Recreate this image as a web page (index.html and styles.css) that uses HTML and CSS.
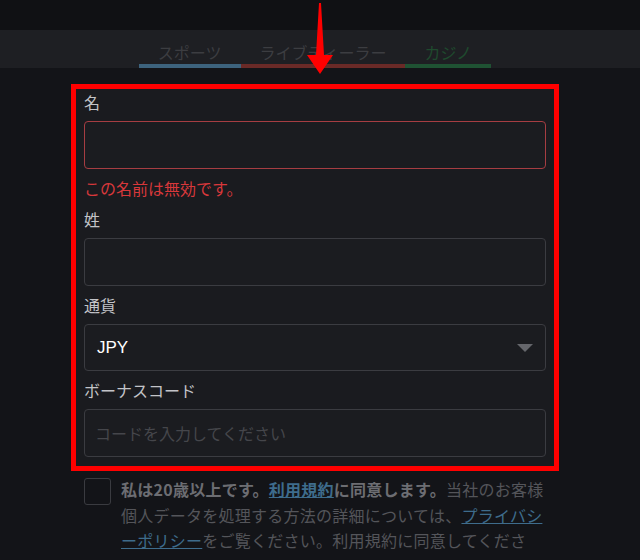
FILE: index.html
```html
<!DOCTYPE html>
<html lang="ja">
<head>
    <meta charset="UTF-8">
    <meta name="viewport" content="width=device-width, initial-scale=1.0">
    <title>登録</title>
    <link rel="stylesheet" href="styles.css">
</head>
<body>
    <div class="topbar"></div>
    <nav class="tabs">
        <a class="tab tab-sports">スポーツ</a>
        <a class="tab tab-live">ライブディーラー</a>
        <a class="tab tab-casino">カジノ</a>
    </nav>

    <svg class="pointer" width="40" height="80" viewBox="0 0 40 80">
        <polygon points="19,3 21,3 24,55 33,55 20,74 7,55 16,55" fill="#ff0000"/>
    </svg>

    <main class="page">
        <form class="form-box">
            <label class="field-label" for="firstName">名</label>
            <input class="field-input invalid" id="firstName" type="text">
            <p class="field-error">この名前は無効です。</p>

            <label class="field-label" for="lastName">姓</label>
            <input class="field-input" id="lastName" type="text">

            <label class="field-label">通貨</label>
            <div class="field-select">
                <span class="select-value">JPY</span>
                <svg width="16" height="8" viewBox="0 0 16 8"><polygon points="0,0 16,0 8,8" fill="#65666b"/></svg>
            </div>

            <label class="field-label" for="bonusCode">ボーナスコード</label>
            <input class="field-input" id="bonusCode" type="text" placeholder="コードを入力してください">
        </form>

        <div class="terms">
            <span class="checkbox"></span>
            <p class="terms-text"><b>私は20歳以上です。<a class="link">利用規約</a>に同意します。</b>当社のお客様個人データを処理する方法の詳細については、<a class="link thin">プライバシーポリシー</a>をご覧ください。利用規約に同意してください。</p>
        </div>
    </main>
</body>
</html>
```

FILE: styles.css
```css
body {
    margin: 0;
    padding: 0;
    background-color: #131418;
    font-family: "Noto Sans CJK JP", "Noto Sans", sans-serif;
    color: #c3c4c8;
    height: 560px;
    overflow: hidden;
}

.topbar {
    height: 30px;
    background-color: #101114;
}

.tabs {
    display: flex;
    justify-content: center;
    height: 38px;
    padding-right: 10px;
    background-color: #1e1f23;
}

.tab {
    padding: 11px 19px 0;
    font-size: 16px;
    line-height: 23px;
    color: #3c3d41;
    border-bottom: 4px solid;
}

.tab-sports {
    border-color: #3d637d;
}

.tab-live {
    border-color: #6a2a27;
}

.tab-casino {
    color: #1f4a2e;
    border-color: #1f5233;
}

.pointer {
    position: absolute;
    top: 0;
    left: 300px;
}

.page {
    padding: 16px 0 0 71px;
}

.form-box {
    display: flex;
    flex-direction: column;
    width: 462px;
    padding: 1px 8px 9px;
    border: 5px solid #ff0000;
    background-color: #1a1b1f;
}

.field-label {
    font-size: 16px;
    line-height: 24px;
    margin-bottom: 7px;
}

.field-input {
    box-sizing: border-box;
    width: 100%;
    height: 48px;
    margin: 0 0 7px;
    padding: 0 10px;
    font-family: inherit;
    font-size: 16px;
    color: #e0e0e0;
    background-color: #1b1c20;
    border: 1px solid #3b3c41;
    border-radius: 4px;
    outline: none;
}

.field-input::placeholder {
    color: #45464b;
}

.field-input.invalid {
    border-color: #a63d42;
}

.field-error {
    margin: 0 0 7px;
    font-size: 16px;
    line-height: 24px;
    color: #d8383b;
}

.field-select {
    box-sizing: border-box;
    display: flex;
    align-items: center;
    justify-content: space-between;
    height: 47px;
    margin-bottom: 7px;
    padding: 0 12px;
    background-color: #1b1c20;
    border: 1px solid #3b3c41;
    border-radius: 4px;
}

.select-value {
    font-family: "Liberation Sans", Arial, sans-serif;
    font-size: 17px;
    color: #ffffff;
}

.field-input:last-child {
    margin-bottom: 0;
}

.terms {
    display: flex;
    gap: 10px;
    margin: 6px 0 0 13px;
}

.checkbox {
    flex: none;
    width: 25px;
    height: 25px;
    margin-top: 1px;
    border: 1px solid #3a3b40;
    border-radius: 3px;
}

.terms-text {
    width: 426px;
    margin: 0;
    font-size: 16px;
    line-height: 25.5px;
    letter-spacing: 0.25px;
    color: #54555a;
    line-break: loose;
}

.terms-text b {
    color: #6c6d72;
}

.link {
    color: #3e6c8c;
    text-decoration: underline;
}

.link.thin {
    font-weight: normal;
}
```
